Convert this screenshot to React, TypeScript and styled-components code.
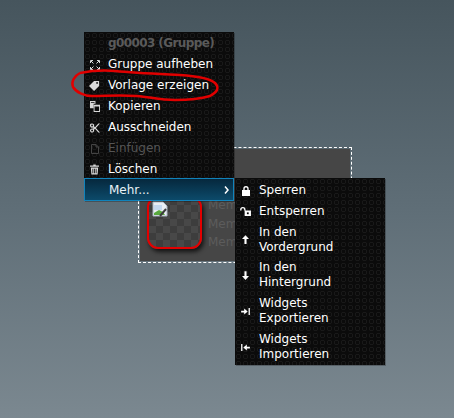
import styled, { createGlobalStyle } from "styled-components";
import type { ReactNode } from "react";

const GlobalStyle = createGlobalStyle`
  html, body {
    margin: 0;
    padding: 0;
  }
  body {
    width: 454px;
    height: 418px;
    overflow: hidden;
    font-family: "DejaVu Sans", Verdana, sans-serif;
  }
`;

const Stage = styled.div`
  position: relative;
  width: 454px;
  height: 418px;
  overflow: hidden;
  background: linear-gradient(180deg, #46555d 0%, #5f6e77 50%, #7b8890 100%);
`;

const GroupBox = styled.div`
  position: absolute;
  left: 138px;
  top: 147px;
  width: 214px;
  height: 116px;
  box-sizing: border-box;
  border: 1px dashed #fff;
  padding: 1px;
  background: #464646 content-box;
  display: flex;
`;

const GroupInner = styled.div`
  display: flex;
  gap: 6px;
  padding: 47px 0 0 7px;
`;

const Thumb = styled.div`
  position: relative;
  width: 55px;
  height: 53px;
  box-sizing: border-box;
  border: 2px solid #e30000;
  border-radius: 11px;
  background: repeating-conic-gradient(#3d3d3d 0 25%, #484848 0 50%) 0 0 / 14px 14px;
  box-shadow: 2px 3px 4px rgba(0, 0, 0, 0.7);
`;

const BrokenImage = styled.svg`
  position: absolute;
  left: 3px;
  top: 3px;
`;

const MemberList = styled.div`
  display: flex;
  flex-direction: column;
  gap: 3.5px;
  padding-top: 2px;
`;

const Member = styled.div`
  font-size: 12px;
  line-height: 15px;
  color: #5c5c5c;
`;

const Menu = styled.div<{ $left: number; $top: number }>`
  position: absolute;
  left: ${(p) => p.$left}px;
  top: ${(p) => p.$top}px;
  width: 150px;
  box-sizing: border-box;
  background-color: #0b0b0b;
  background-image: radial-gradient(
    circle at 3.5px 3.5px,
    transparent 0 1.4px,
    #191919 1.6px 2.6px,
    transparent 2.9px
  );
  background-size: 7px 7px;
  box-shadow: 1px 1px 0 rgba(0, 0, 0, 0.25);
`;

const Row = styled.div<{ $height?: number; $disabled?: boolean }>`
  position: relative;
  display: flex;
  align-items: center;
  box-sizing: border-box;
  height: ${(p) => p.$height ?? 21}px;
  font-size: 12px;
  line-height: 15px;
  color: ${(p) => (p.$disabled ? "#555" : "#fff")};
`;

const ActiveRow = styled(Row)`
  height: 23px;
  margin-top: -2px;
  padding-top: 1px;
  border: 1px solid #1183bb;
  background: linear-gradient(180deg, #06283d 0%, #0c4a6a 100%);
  color: #e9f2f6;
`;

const HeaderRow = styled(Row)`
  padding-left: 24px;
  font-weight: 700;
  letter-spacing: -0.6px;
  color: #5a5a5a;
`;

const IconSlot = styled.span`
  flex: 0 0 24px;
  box-sizing: border-box;
  display: flex;
  justify-content: center;
  padding-right: 3px;
`;

const Chevron = styled.svg`
  position: absolute;
  right: 4px;
  top: 7px;
`;

const MainMenuBody = styled.div`
  padding-top: 1px;
`;

const SubBody = styled.div`
  padding: 2px 0 0;
  height: 187px;
  box-sizing: border-box;
`;

const Scribble = styled.svg`
  position: absolute;
  left: 70px;
  top: 66px;
  pointer-events: none;
`;

const ICON = "#d8d8d8";

const Expand = () => (
  <svg width="10" height="10" viewBox="0 0 10 10" fill="none" stroke={ICON} strokeWidth="1">
    <path d="M0.500 3V0.500H3M7 0.500h2.500V3M0.500 7v2.500H3M7 9.500h2.500V7M1 1l2.500 2.500M9 1L6.500 3.500M1 9l2.500-2.500M9 9L6.500 6.500" />
  </svg>
);

const Tag = () => (
  <svg width="11" height="11" viewBox="0 0 12 12" fill={ICON}>
    <path d="M5.500 1H11v5.500L5.500 12 0 6.500zM8.800 2.200a1 1 0 1 0 0 2 1 1 0 0 0 0-2z" fillRule="evenodd" />
  </svg>
);

const Copy = () => (
  <svg width="10" height="11" viewBox="0 0 11 12" fill={ICON}>
    <path d="M0 0h6v3H4v5H0zM1 1v1h4V1z" fillRule="evenodd" />
    <path d="M4 4h7v8H4zM5 6v5h5V6z" fillRule="evenodd" />
  </svg>
);

const Scissors = () => (
  <svg width="10" height="10" viewBox="0 0 12 11" fill={ICON}>
    <path d="M2.500 0a2.500 2.500 0 0 1 2.300 3.400L6 4.500 10 0h2L7 5.500 12 11h-2L6 6.500 4.800 7.600A2.500 2.500 0 1 1 3.400 6.200L4.600 5.500 3.400 4.800A2.500 2.500 0 1 1 2.500 0zm0 1.400a1.100 1.100 0 1 0 0 2.200 1.100 1.100 0 0 0 0-2.200zm0 6a1.100 1.100 0 1 0 0 2.200 1.100 1.100 0 0 0 0-2.200z" fillRule="evenodd" />
  </svg>
);

const Page = () => (
  <svg width="8" height="10" viewBox="0 0 8 10" fill="none" stroke="#444">
    <path d="M0.500 0.500h4.500l2.500 2.500v6.500H0.500zM5 0.500V3h2.500" />
  </svg>
);

const Trash = () => (
  <svg width="9" height="11" viewBox="0 0 11 12" fill={ICON}>
    <path d="M4 0h3v1h4v1.500H0V1h4zM1 3.500h9L9.300 12H1.700zM3 5v5.500h1V5zM5 5v5.500h1V5zM7 5v5.500h1V5z" fillRule="evenodd" />
  </svg>
);

const Lock = () => (
  <svg width="8" height="10" viewBox="0 0 9 11" fill="#fff">
    <path d="M1.500 4.500V3a3 3 0 0 1 6 0v1.500H9V11H0V4.500zM3 4.500h3V3a1.500 1.500 0 0 0-3 0z" fillRule="evenodd" />
  </svg>
);

const Unlock = () => (
  <svg width="12" height="9" viewBox="0 0 13 10" fill="#fff">
    <path d="M5 4h7v6H5zM0 3a3 3 0 0 1 6 0v1H4.500V3a1.500 1.500 0 0 0-3 0v1H0z" />
    <path d="M7.500 6h2v2h-2z" fill="#000" />
  </svg>
);

const Up = () => (
  <svg width="7" height="9" viewBox="0 0 8 10" fill="#fff">
    <path d="M4 0l4 4.500H5.200V10H2.800V4.500H0z" />
  </svg>
);

const Down = () => (
  <svg width="7" height="9" viewBox="0 0 8 10" fill="#fff">
    <path d="M4 10l4-4.500H5.200V0H2.800v5.500H0z" />
  </svg>
);

const Export = () => (
  <svg width="9" height="7" viewBox="0 0 10 8" fill="#fff">
    <path d="M0 3h3.500V0.500L7.500 4l-4 3.500V5H0zM8.500 0H10v8H8.500z" />
  </svg>
);

const Import = () => (
  <svg width="9" height="7" viewBox="0 0 10 8" fill="#fff">
    <path d="M0 0h1.500v8H0zM10 3H6.500V0.500L2.500 4l4 3.500V5H10z" />
  </svg>
);

const MenuItem = ({ icon, children, disabled, height }: { icon?: ReactNode; children: ReactNode; disabled?: boolean; height?: number }) => (
  <Row $disabled={disabled} $height={height}>
    <IconSlot>{icon}</IconSlot>
    <span>{children}</span>
  </Row>
);

export default function App() {
  return (
    <Stage>
      <GlobalStyle />
      <GroupBox>
        <GroupInner>
          <Thumb>
            <BrokenImage width="16" height="16" viewBox="0 0 16 16">
              <path d="M1 1h10l4 4v10H1z" fill="#e9eef4" stroke="#a9b4c0" />
              <path d="M2 4h8v5H2z" fill="#c4d8ef" />
              <path d="M2 14V12l5-3 4 2 2 3z" fill="#58a83e" />
              <path d="M14 8L8 15" stroke="#3c3c3c" strokeWidth="2" />
            </BrokenImage>
          </Thumb>
          <MemberList>
            <Member>Mem</Member>
            <Member>Mem</Member>
            <Member>Mem</Member>
          </MemberList>
        </GroupInner>
      </GroupBox>

      <Menu $left={84} $top={32}>
        <MainMenuBody>
          <HeaderRow>g00003 (Gruppe)</HeaderRow>
          <MenuItem icon={<Expand />}>Gruppe aufheben</MenuItem>
          <MenuItem icon={<Tag />}>Vorlage erzeigen</MenuItem>
          <MenuItem icon={<Copy />}>Kopieren</MenuItem>
          <MenuItem icon={<Scissors />}>Ausschneiden</MenuItem>
          <MenuItem icon={<Page />} disabled>Einfügen</MenuItem>
          <MenuItem icon={<Trash />}>Löschen</MenuItem>
          <ActiveRow>
            <IconSlot />
            <span>Mehr...</span>
            <Chevron width="5" height="8" viewBox="0 0 5 8" fill="none" stroke="#fff" strokeWidth="1.500">
              <path d="M1 0.500L4 4 1 7.500" />
            </Chevron>
          </ActiveRow>
        </MainMenuBody>
      </Menu>

      <Menu $left={235} $top={178}>
        <SubBody>
          <MenuItem icon={<Lock />}>Sperren</MenuItem>
          <MenuItem icon={<Unlock />}>Entsperren</MenuItem>
          <MenuItem icon={<Up />} height={35}>In den<br />Vordergrund</MenuItem>
          <MenuItem icon={<Down />} height={36}>In den<br />Hintergrund</MenuItem>
          <MenuItem icon={<Export />} height={36}>Widgets<br />Exportieren</MenuItem>
          <MenuItem icon={<Import />} height={36}>Widgets<br />Importieren</MenuItem>
        </SubBody>
      </Menu>

      <Scribble width="154" height="38" viewBox="70 66 154 38" fill="none">
        <path d="M80 73C90 71 103 70 115 71C135 73 160 74 180 75C195 76 209 78 215 83C220 88 217 92 210 96C200 99 190 100 175 100C160 100 150 97 137 96C120 95 105 96 92 96C84 96 76 92 73 87C71 82 74 76 80 73" stroke="#e00000" strokeWidth="2.500" />
      </Scribble>
    </Stage>
  );
}
